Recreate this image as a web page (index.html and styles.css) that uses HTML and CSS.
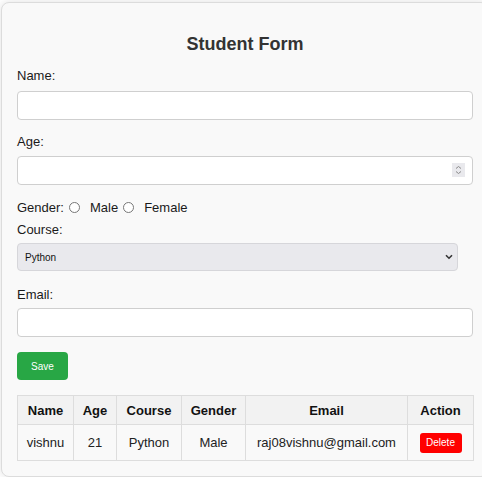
FILE: index.html
```html
<!DOCTYPE html>
<html>
<head>
<meta charset="utf-8">
<link rel="stylesheet" href="styles.css">
</head>
<body>
<div class="card">
  <h2 class="title">Student Form</h2>
  <div class="field field-name">
    <label class="lbl">Name:</label>
    <input class="inp" type="text">
  </div>
  <div class="field field-age">
    <label class="lbl">Age:</label>
    <div class="num-wrap">
      <input class="inp" type="number">
      <span class="spin">
        <svg width="13" height="14" viewBox="0 0 13 14"><path d="M4 5.5 L6.5 3.5 L9 5.5" fill="none" stroke="#8a8a8a" stroke-width="1"/><path d="M4 8.5 L6.5 10.5 L9 8.5" fill="none" stroke="#8a8a8a" stroke-width="1"/></svg>
      </span>
    </div>
  </div>
  <div class="gender-row">
    <span>Gender:</span>
    <input class="radio" type="radio" name="g"><span>Male</span>
    <input class="radio" type="radio" name="g"><span>Female</span>
  </div>
  <div class="field field-course">
    <label class="lbl lbl-course">Course:</label>
    <div class="sel-wrap">
      <select class="sel"><option>Python</option></select>
      <svg class="chev" width="8" height="6" viewBox="0 0 8 6"><path d="M1 1.2 L4 4.2 L7 1.2" fill="none" stroke="#333" stroke-width="1.6"/></svg>
    </div>
  </div>
  <div class="field">
    <label class="lbl lbl-email">Email:</label>
    <input class="inp" type="text">
  </div>
  <button class="save">Save</button>
  <table class="tbl">
    <thead>
      <tr>
        <th class="c-name">Name</th>
        <th class="c-age">Age</th>
        <th class="c-course">Course</th>
        <th class="c-gender">Gender</th>
        <th class="c-email">Email</th>
        <th class="c-action">Action</th>
      </tr>
    </thead>
    <tbody>
      <tr>
        <td>vishnu</td>
        <td>21</td>
        <td>Python</td>
        <td>Male</td>
        <td>raj08vishnu@gmail.com</td>
        <td><button class="del">Delete</button></td>
      </tr>
    </tbody>
  </table>
</div>
</body>
</html>
```
FILE: styles.css
```css
html, body {
  margin: 0;
  padding: 0;
  background: #ffffff;
  overflow: hidden;
}
body {
  font-family: "Liberation Sans", Arial, sans-serif;
  font-size: 13px;
  color: #1a1a1a;
}
.card {
  box-sizing: border-box;
  width: 488px;
  margin: 2px 0 0 1px;
  padding: 15px;
  background: #f9f9f9;
  border: 1px solid #dcdcdc;
  border-radius: 8px;
  box-shadow: 0 0 8px rgba(0,0,0,0.12);
}
.title {
  margin: 15px 0 0 0;
  font-size: 18px;
  line-height: 22px;
  text-align: center;
  color: #333;
  font-weight: bold;
}
.field {
  margin-bottom: 15px;
}
.field-name {
  margin-top: 13px;
  margin-bottom: 14px;
}
.field-course {
  margin-bottom: 16px;
}
.lbl {
  display: block;
  line-height: 15px;
  margin-bottom: 8px;
}
.field-age .lbl { margin-bottom: 7px; }
.lbl-course, .lbl-email { margin-bottom: 6px; }
.inp {
  display: block;
  box-sizing: border-box;
  width: 100%;
  height: 29px;
  margin: 0;
  padding: 0 8px;
  border: 1px solid #cfcfcf;
  border-radius: 4px;
  background: #fff;
  font-family: inherit;
  font-size: 13px;
  outline: none;
}
.num-wrap {
  position: relative;
}
.inp[type=number] {
  -moz-appearance: textfield;
}
.inp[type=number]::-webkit-inner-spin-button,
.inp[type=number]::-webkit-outer-spin-button {
  -webkit-appearance: none;
  margin: 0;
}
.spin {
  position: absolute;
  left: 435px;
  top: 7px;
  width: 13px;
  height: 14px;
  background: #e9e9ed;
  display: block;
}
.spin svg { display: block; }
.gender-row {
  display: flex;
  align-items: center;
  height: 15px;
  line-height: 15px;
  margin-bottom: 7px;
}
.radio {
  margin: 0 10px 0 5px;
  width: 11px;
  height: 11px;
  -webkit-appearance: none;
  appearance: none;
  border: 1px solid #777;
  border-radius: 50%;
  background: #fff;
  box-sizing: border-box;
}
.sel-wrap {
  position: relative;
  width: 441px;
}
.sel {
  display: block;
  box-sizing: border-box;
  width: 441px;
  height: 28px;
  margin: 0;
  padding: 0 7px;
  -webkit-appearance: none;
  appearance: none;
  background: #e9e9ed;
  border: 1px solid #d6d6da;
  border-radius: 4px;
  font-family: "Liberation Sans", Arial, sans-serif;
  font-size: 10px;
  color: #111;
  outline: none;
}
.chev {
  position: absolute;
  left: 428px;
  top: 11px;
}
.save {
  display: block;
  box-sizing: border-box;
  width: 51px;
  height: 28px;
  margin: 0 0 15px 0;
  padding: 0;
  background: #28a745;
  color: #fff;
  border: none;
  border-radius: 4px;
  font-family: "Liberation Sans", Arial, sans-serif;
  font-size: 10px;
}
.tbl {
  width: 456px;
  border-collapse: collapse;
  table-layout: fixed;
}
.tbl th, .tbl td {
  border: 1px solid #dddddd;
  text-align: center;
  padding: 0;
  font-size: 13px;
}
.tbl th {
  background: #f2f2f2;
  height: 28px;
  font-weight: bold;
  color: #111;
}
.tbl td {
  height: 35px;
  color: #222;
}
.c-name { width: 55px; }
.c-age { width: 42px; }
.c-course { width: 64px; }
.c-gender { width: 63px; }
.c-email { width: 161px; }
.c-action { width: 65px; }
.del {
  width: 42px;
  height: 20px;
  padding: 0;
  background: #ff0000;
  color: #fff;
  border: none;
  border-radius: 3px;
  font-family: "Liberation Sans", Arial, sans-serif;
  font-size: 10px;
  vertical-align: middle;
}
```
